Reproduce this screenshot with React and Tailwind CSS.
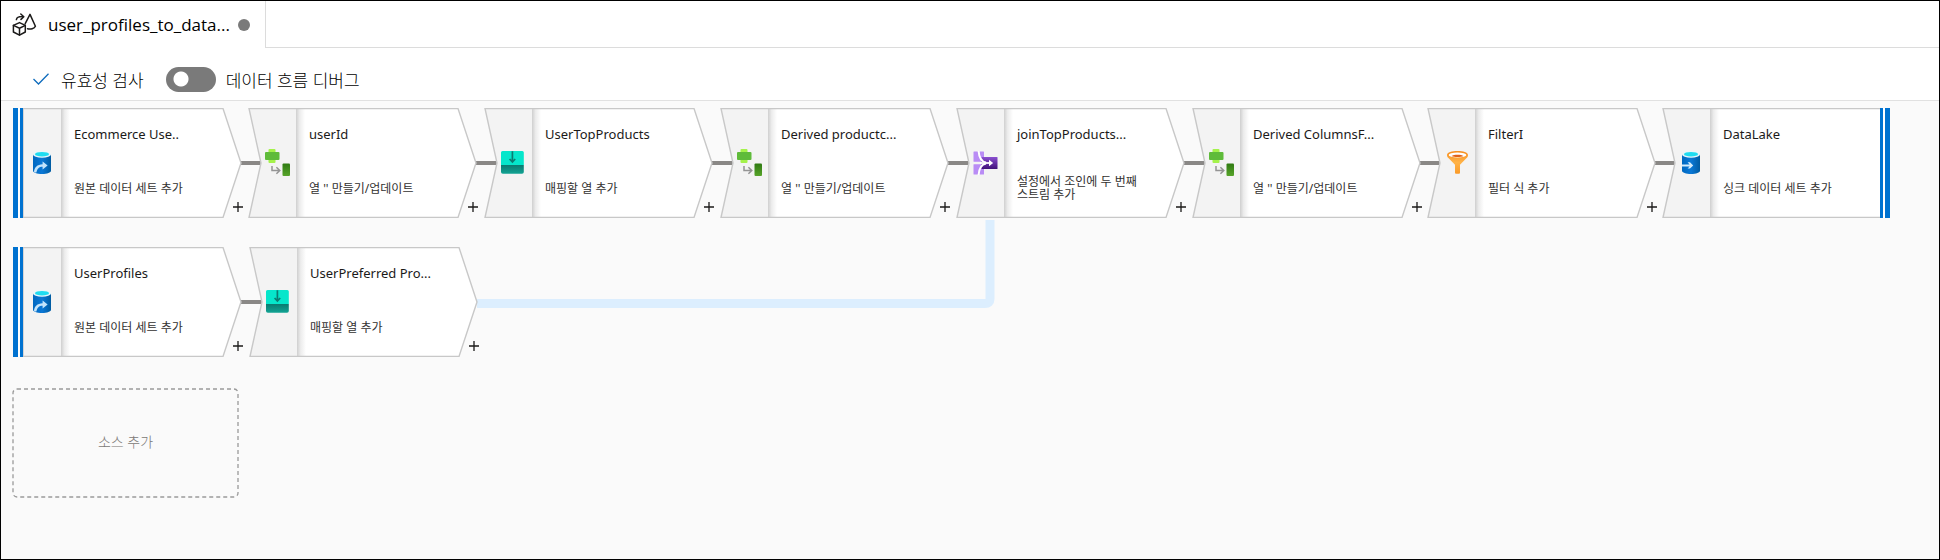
import React from "react";

function DataFlowIcon() {
  return (
    <svg width="25" height="24" viewBox="0 0 25 24" fill="none" stroke="#1b1a19" strokeWidth="1.5" strokeLinejoin="round" strokeLinecap="round">
      <path d="M7.5 9.6 L13.3 12.4 V19 L7.5 22.2 L1.4 19 V12.4 Z" />
      <path d="M1.4 12.4 L7.5 15.2 L13.3 12.4 M7.5 15.2 V22" />
      <path d="M13.2 10.6 L18 1.4 L23.4 13.2 C22.4 15.8 18.5 16.6 15.5 15.8" />
      <path d="M4.4 6.6 C4.8 4.4 7.5 3.4 11 3.6 M8.8 1 L11.8 3.7 L9 6.4" />
    </svg>
  );
}

function Cylinder({ id, children }) {
  return (
    <svg width="18" height="23" viewBox="0 0 18 23">
      <defs>
        <linearGradient id={id} x1="0" y1="0" x2="1" y2="0">
          <stop offset="0" stopColor="#0068c0" />
          <stop offset="0.5" stopColor="#0a78d6" />
          <stop offset="1" stopColor="#005ba1" />
        </linearGradient>
      </defs>
      <path d="M0 3.6 H18 V19.8 C18 21.6 14 23 9 23 C4 23 0 21.6 0 19.8 Z" fill={`url(#${id})`} />
      <ellipse cx="9" cy="3.4" rx="9" ry="3.3" fill="#e8f6fa" />
      <ellipse cx="9" cy="3.2" rx="7" ry="2.3" fill="#1fdcf0" />
      {children}
    </svg>
  );
}

function SourceIcon({ id }) {
  return (
    <Cylinder id={id}>
      <path d="M1 21 C1.4 16.2 4.2 13.4 9.6 13.2 V10.4 L14.6 14.6 L9.6 18.6 V15.8 C6 15.8 4.2 17.6 3.4 21.6 C2.4 21.6 1.6 21.4 1 21 Z" fill="#c3e4fb" />
    </Cylinder>
  );
}

function SinkIcon({ id }) {
  return (
    <Cylinder id={id}>
      <path d="M0 13.4 H7.6 L5.6 11.2 H8 L11.2 14.4 L8 17.6 H5.6 L7.6 15.4 H0 Z" fill="#d3ecfc" />
    </Cylinder>
  );
}

function DeriveIcon({ id }) {
  return (
    <svg width="26" height="28" viewBox="0 0 26 28">
      <defs>
        <linearGradient id={id} x1="0" y1="0" x2="0" y2="1">
          <stop offset="0" stopColor="#2f7a12" />
          <stop offset="1" stopColor="#57a42a" />
        </linearGradient>
      </defs>
      <rect x="3.5" y="0" width="7" height="14" rx="1" fill="#a4f24a" />
      <rect x="0" y="3" width="14.5" height="8" rx="1" fill="#5fbb3a" />
      <path d="M7 17 V21.5 H14 M11.4 18.2 L14.8 21.5 L11.4 24.8" fill="none" stroke="#949494" strokeWidth="1.5" />
      <rect x="17.5" y="14.5" width="7.5" height="12.5" rx="1" fill={`url(#${id})`} />
    </svg>
  );
}

function SelectIcon({ id }) {
  return (
    <svg width="23" height="23" viewBox="0 0 23 23">
      <defs>
        <linearGradient id={id} x1="0" y1="0" x2="0" y2="1">
          <stop offset="0" stopColor="#0a7a70" />
          <stop offset="1" stopColor="#12a494" />
        </linearGradient>
      </defs>
      <path d="M1.5 0 H21.3 A1.5 1.5 0 0 1 22.8 1.5 V14 H0 V1.5 A1.5 1.5 0 0 1 1.5 0 Z" fill="#06e6cb" />
      <path d="M0 14 H22.8 V21 A1.8 1.8 0 0 1 21 22.8 H1.8 A1.8 1.8 0 0 1 0 21 Z" fill={`url(#${id})`} />
      <path d="M11.4 0.3 V10.5 M8.6 8 L11.4 11 L14.2 8" fill="none" stroke="#0a7c72" strokeWidth="1.7" />
    </svg>
  );
}

function JoinIcon({ id }) {
  return (
    <svg width="25" height="24" viewBox="0 0 25 24">
      <defs>
        <linearGradient id={id} x1="0" y1="0" x2="0" y2="1">
          <stop offset="0" stopColor="#8a4fd0" />
          <stop offset="1" stopColor="#41127a" />
        </linearGradient>
      </defs>
      <rect x="0.5" y="0.5" width="10.5" height="10.3" rx="0.6" fill="#b98cf5" />
      <rect x="0.5" y="13.2" width="10.5" height="10.3" rx="0.6" fill="#b98cf5" />
      <rect x="8.5" y="6" width="16" height="12" rx="0.6" fill={`url(#${id})`} />
      <path d="M5.6 0 C6 6 8 10.6 13 11.6 M5.6 24 C6 18 8 13.4 13 12.4" fill="none" stroke="#fff" strokeWidth="2" />
      <path d="M7 12 H18" stroke="#fff" strokeWidth="1.8" />
      <path d="M16 8.8 L20.2 12 L16 15.2 Z" fill="#fff" />
    </svg>
  );
}

function FilterIcon({ id }) {
  return (
    <svg width="21" height="23" viewBox="0 0 21 23">
      <defs>
        <linearGradient id={id} x1="0" y1="0" x2="0" y2="1">
          <stop offset="0" stopColor="#f78d1e" />
          <stop offset="0.5" stopColor="#ffb347" />
          <stop offset="1" stopColor="#fa9a28" />
        </linearGradient>
      </defs>
      <path d="M0 4 C0 1.4 5 0 10.5 0 C16 0 21 1.4 21 4 C21 5.4 20.4 6.2 19.6 7 L13 13.8 V21.8 A1 1 0 0 1 12 22.8 H9 A1 1 0 0 1 8 21.8 V13.8 L1.4 7 C0.6 6.2 0 5.4 0 4 Z" fill={`url(#${id})`} />
      <ellipse cx="10.5" cy="4" rx="8.8" ry="2.6" fill="#fff" />
      <path d="M4.6 5 C6.6 3.2 14.4 3.2 16.4 5 C14 6.4 7 6.4 4.6 5 Z" fill="#e0621a" />
    </svg>
  );
}

const ICONS = {
  source: SourceIcon,
  sink: SinkIcon,
  derive: DeriveIcon,
  select: SelectIcon,
  join: JoinIcon,
  filter: FilterIcon,
};

const ICON_INSETS = {
  source: "pl-5",
  sink: "pl-5",
  derive: "pl-[17px]",
  select: "pl-[17px]",
  join: "pl-[17px]",
  filter: "pl-5",
};

/* Positions are relative to the canvas below the toolbar. */
const NODES = [
  { id: "n1", kind: "source", x: 12, y: 7, title: "Ecommerce Use..", note: "원본 데이터 세트 추가" },
  { id: "n2", kind: "derive", x: 247, y: 7, title: "userId", note: "열 '' 만들기/업데이트" },
  { id: "n3", kind: "select", x: 483, y: 7, title: "UserTopProducts", note: "매핑할 열 추가" },
  { id: "n4", kind: "derive", x: 719, y: 7, title: "Derived productc...", note: "열 '' 만들기/업데이트" },
  { id: "n5", kind: "join", x: 955, y: 7, title: "joinTopProducts...", note: "설정에서 조인에 두 번째 스트림 추가" },
  { id: "n6", kind: "derive", x: 1191, y: 7, title: "Derived ColumnsF...", note: "열 '' 만들기/업데이트" },
  { id: "n7", kind: "filter", x: 1426, y: 7, title: "FilterI", note: "필터 식 추가" },
  { id: "n8", kind: "sink", x: 1661, y: 7, title: "DataLake", note: "싱크 데이터 세트 추가" },
  { id: "n9", kind: "source", x: 12, y: 146, title: "UserProfiles", note: "원본 데이터 세트 추가" },
  { id: "n10", kind: "select", x: 248, y: 146, title: "UserPreferred Pro...", note: "매핑할 열 추가" },
];

function NodeShape({ kind, id }) {
  const source = kind === "source";
  const sink = kind === "sink";
  const left = source ? "M10 109.5 V0.5" : "M1 109.5 L13 55 L1 0.5";
  const right = sink ? "H226 V109.5" : "H210 L228 55 L210 109.5";
  return (
    <svg className="absolute inset-0" width="230" height="110" viewBox="0 0 230 110" fill="none">
      <defs>
        <linearGradient id={`${id}-fade`} x1="0" y1="0" x2="1" y2="0">
          <stop offset="0" stopColor="#cfcfcf" />
          <stop offset="0.4" stopColor="#ececec" />
          <stop offset="1" stopColor="#ffffff" />
        </linearGradient>
      </defs>
      <path d={`${left} ${right} Z`} fill="#fff" />
      <path d={`${left} H49 V109.5 Z`} fill="#f3f3f3" />
      <rect x="48" y="1" width="9" height="108" fill={`url(#${id}-fade)`} />
      <path d={`${left} ${right} Z`} stroke="#c8c8c8" strokeWidth="1.4" />
      {source && (
        <>
          <rect x="0" y="0" width="10" height="110" fill="#fff" />
          <rect x="0" y="0" width="5" height="110" fill="#0072d0" />
          <rect x="7" y="0" width="3" height="110" fill="#0072d0" />
        </>
      )}
      {sink && (
        <>
          <rect x="218" y="0" width="10" height="110" fill="#fff" />
          <rect x="218" y="0" width="3" height="110" fill="#0072d0" />
          <rect x="223" y="0" width="5" height="110" fill="#0072d0" />
        </>
      )}
    </svg>
  );
}

function FlowNode({ node }) {
  const Icon = ICONS[node.kind];
  return (
    <article className="absolute h-[110px] w-[230px]" style={{ left: node.x, top: node.y }}>
      <NodeShape kind={node.kind} id={node.id} />
      <div className="relative flex h-[110px]">
        <div className={`flex w-[61px] shrink-0 items-center pb-px ${ICON_INSETS[node.kind]}`}>
          <Icon id={`${node.id}-icon`} />
        </div>
        <div className="flex w-[130px] flex-col pt-[17px]">
          <h2 className="text-[13px] leading-[18px] whitespace-nowrap text-[#1b1a19]">{node.title}</h2>
          <p className="mt-[25px] flex h-10 items-center text-[12px] leading-[13px] break-keep text-[#323130]">{node.note}</p>
        </div>
      </div>
      {node.kind !== "sink" && (
        <button type="button" aria-label="+" className="absolute top-[91px] left-[217px] flex size-4 items-center justify-center">
          <svg width="10" height="10" viewBox="0 0 10 10" stroke="#1b1a19" strokeWidth="1.3">
            <path d="M5 0 V10 M0 5 H10" />
          </svg>
        </button>
      )}
    </article>
  );
}

const LINKS = [
  [240, 62],
  [475, 62],
  [711, 62],
  [947, 62],
  [1183, 62],
  [1419, 62],
  [1653, 62],
  [240, 201],
];

export default function App() {
  return (
    <main className="flex min-h-screen flex-col border border-black bg-white font-['Noto_Sans','Noto_Sans_CJK_KR',sans-serif] text-black">
      <header className="flex h-[47px]">
        <div className="flex w-[265px] shrink-0 items-center border-r border-[#dcdcdc] pl-[11px]">
          <DataFlowIcon />
          <h1 className="ml-[11px] font-['Open_Sans',sans-serif] text-[17px] leading-6 whitespace-nowrap">user_profiles_to_data...</h1>
          <span className="ml-2 size-3 shrink-0 rounded-full bg-[#7a7a7a]" />
        </div>
        <div className="flex-1 border-b border-[#dcdcdc]" />
      </header>

      <div className="flex h-[53px] items-center border-b border-[#e1e1e1] pt-[10px] pl-8">
        <button type="button" className="flex items-center gap-3 text-[17px] leading-6 font-light">
          <svg width="16" height="12" viewBox="0 0 16 12" fill="none" stroke="#0f6cbd" strokeWidth="1.3">
            <path d="M0.5 6 L5.5 11 L15.5 0.8" />
          </svg>
          <span className="pt-[3px]">유효성 검사</span>
        </button>
        <label className="ml-[22px] flex items-center gap-[10px] text-[17px] leading-6 font-light">
          <input
            type="checkbox"
            role="switch"
            className="h-[25px] w-[50px] appearance-none rounded-full bg-[#7a7a7a] bg-[radial-gradient(circle_at_15px_12px,#fff_7px,transparent_8px)]"
          />
          <span className="pt-[3px]">데이터 흐름 디버그</span>
        </label>
      </div>

      <section className="relative min-h-[456px] flex-1 overflow-hidden bg-[#fafafa]">
        <svg className="absolute top-0 left-0" width="1700" height="300" viewBox="0 0 1700 300" fill="none">
          <path d="M476 202.5 H984 Q989 202.5 989 198 V119" stroke="#dceefe" strokeWidth="9" />
          {LINKS.map(([x, y]) => (
            <path key={`${x}-${y}`} d={`M${x} ${y} h21`} stroke="#8a8886" strokeWidth="4" />
          ))}
        </svg>
        {NODES.map((node) => (
          <FlowNode key={node.id} node={node} />
        ))}
        <button type="button" className="absolute top-[287px] left-[11px] h-[110px] w-[227px] pb-1 text-[14px] font-light text-[#7a7876]">
          <svg className="absolute inset-0" width="227" height="110" viewBox="0 0 227 110" fill="none">
            <rect x="1" y="1" width="225" height="108" rx="4" stroke="#9a9a9a" strokeWidth="1.3" strokeDasharray="4 3" />
          </svg>
          소스 추가
        </button>
      </section>
    </main>
  );
}
